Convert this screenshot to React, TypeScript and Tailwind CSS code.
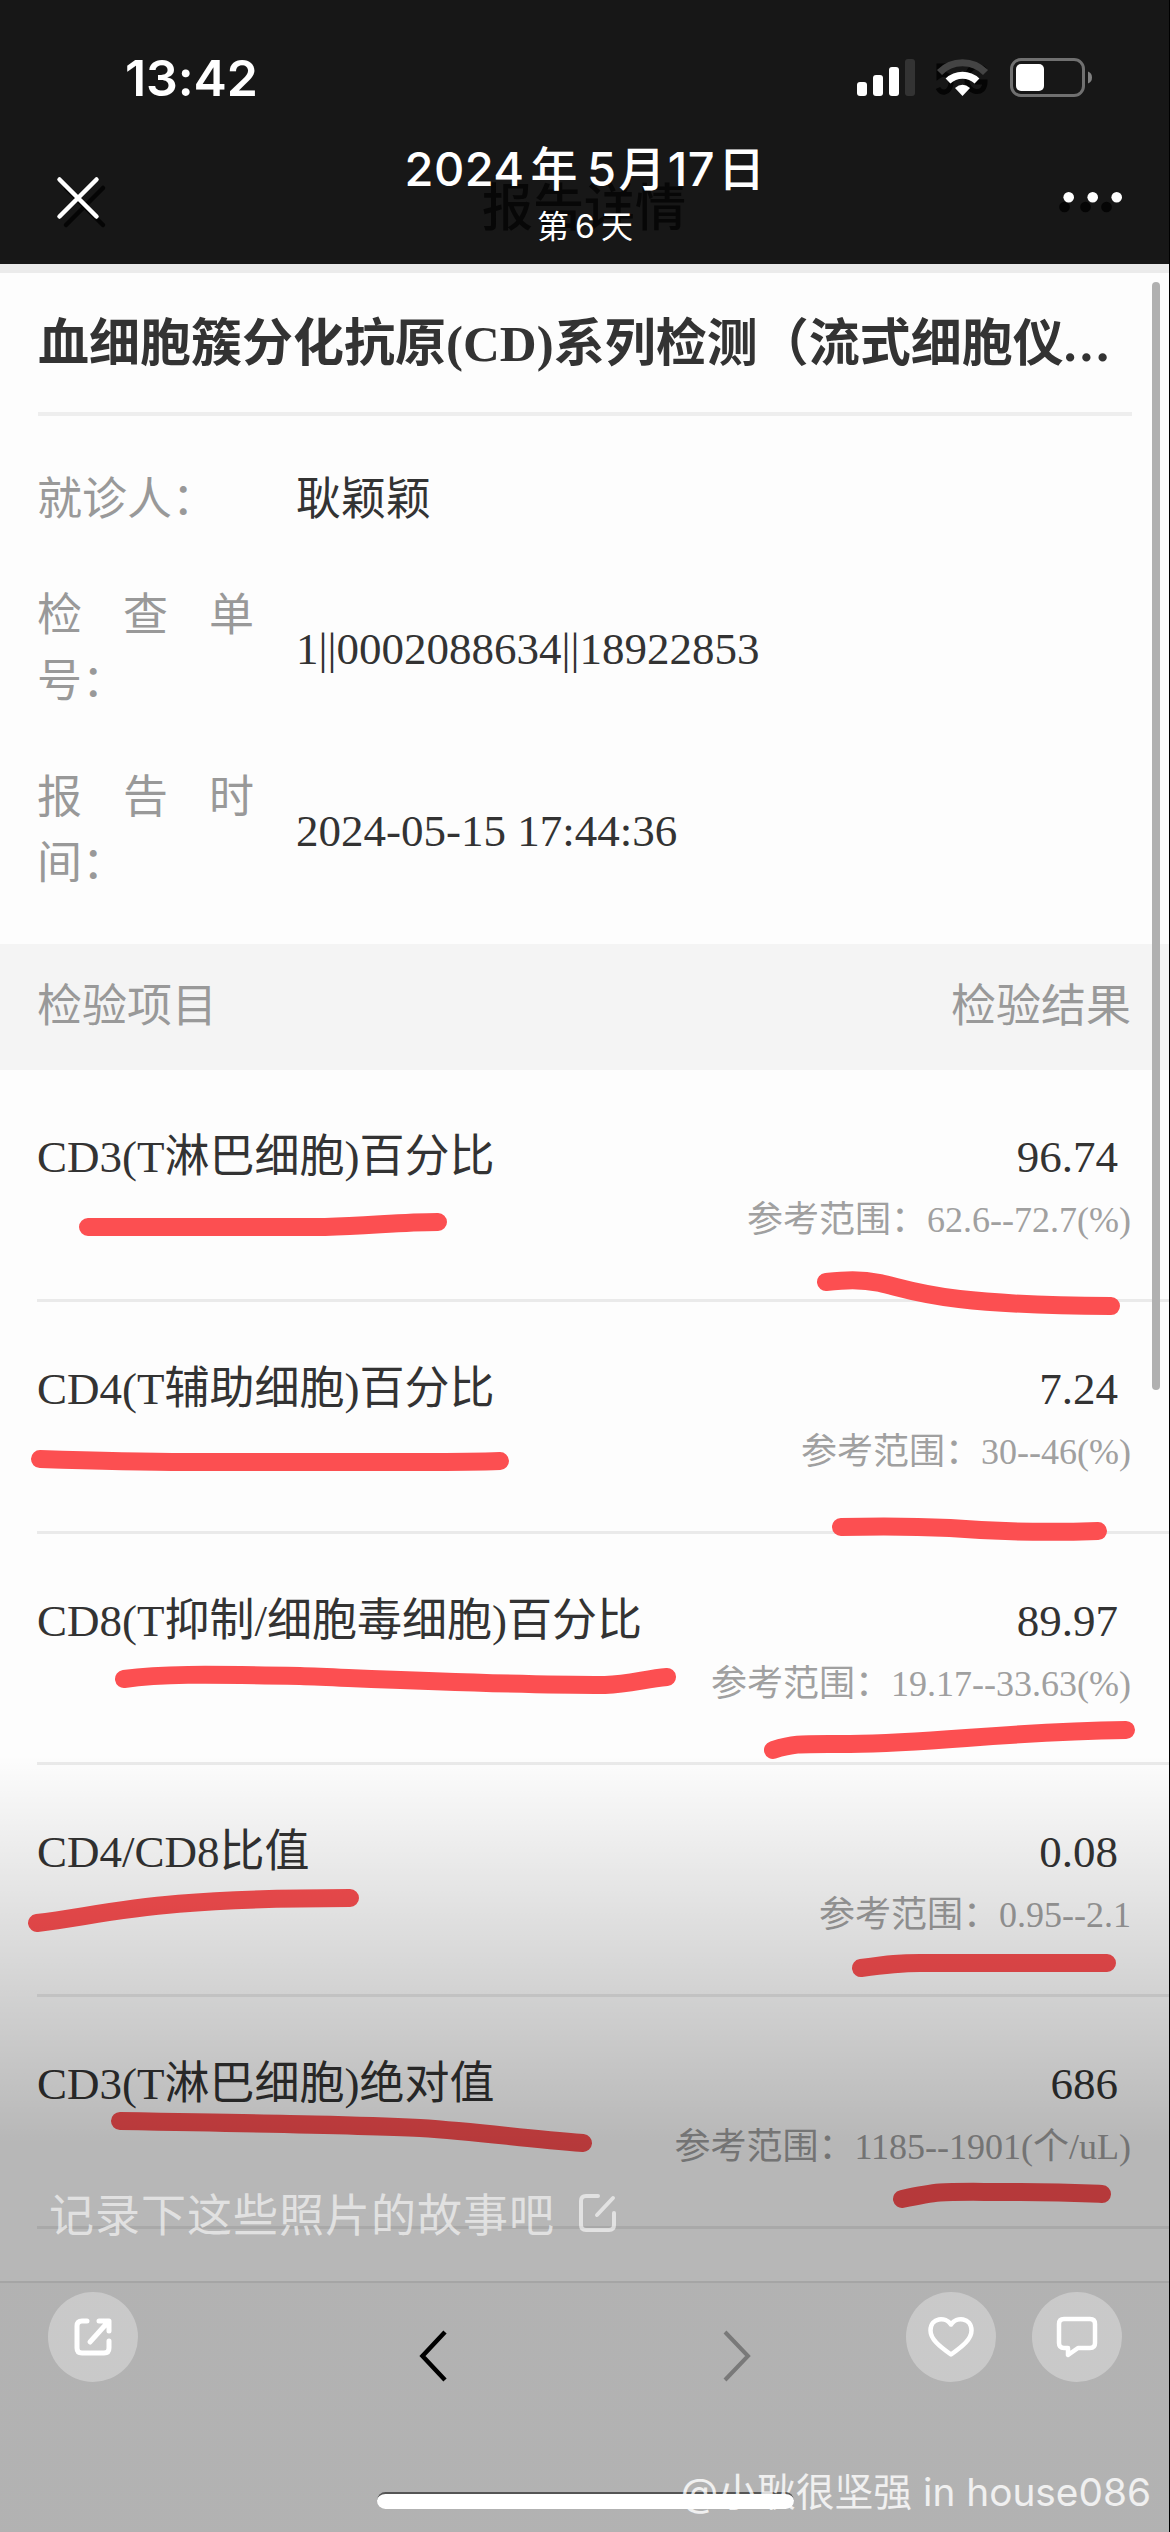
import React from "react";

const serif = "font-['Liberation_Serif','Noto_Sans_CJK_SC',serif]";

type Row = { name: string; value: string; range: string };

const rows: Row[] = [
  { name: "CD3(T淋巴细胞)百分比", value: "96.74", range: "62.6--72.7(%)" },
  { name: "CD4(T辅助细胞)百分比", value: "7.24", range: "30--46(%)" },
  { name: "CD8(T抑制/细胞毒细胞)百分比", value: "89.97", range: "19.17--33.63(%)" },
  { name: "CD4/CD8比值", value: "0.08", range: "0.95--2.1" },
  { name: "CD3(T淋巴细胞)绝对值", value: "686", range: "1185--1901(个/uL)" },
];

const strokes = [
  "M88 1227H325C370 1226 400 1222 438 1222",
  "M826 1282C845 1280 860 1279 880 1283C915 1291 940 1305 1111 1306",
  "M40 1459C100 1461 130 1462 187 1462H420C450 1462 475 1462 500 1461",
  "M841 1527C880 1526 910 1526 950 1528C1000 1532 1040 1533 1098 1531",
  "M124 1679C160 1674 200 1674 300 1676C400 1680 500 1685 605 1685C630 1684 645 1679 667 1677",
  "M773 1750C795 1743 800 1744 850 1744C940 1743 1000 1732 1126 1730",
  "M37 1923C110 1914 150 1898 350 1898",
  "M861 1968C890 1964 900 1963 920 1963H1107",
  "M120 2121C300 2124 360 2125 420 2128C480 2132 520 2138 583 2143",
  "M902 2199C945 2190 940 2192 1020 2192C1060 2192 1080 2193 1102 2194",
];

function Header() {
  return (
    <header className="relative h-[264px] shrink-0 bg-[#171717] text-white font-['Inter','Noto_Sans_CJK_SC',sans-serif]">
      <div className="flex h-[156px] items-center justify-between pl-[125px] pr-[78px]">
        <span className="text-[50px] leading-none font-semibold tracking-[-0.1px]">13:42</span>
        <svg width="236" height="42" viewBox="855 57 236 42" fill="none">
          <rect x="856" y="82" width="10" height="14" rx="3" fill="#fff" />
          <rect x="872" y="75" width="10" height="21" rx="3" fill="#fff" />
          <rect x="888" y="67" width="10" height="29" rx="3" fill="#fff" />
          <rect x="904" y="59" width="10" height="37" rx="3" fill="#333" />
          <path d="M950 66H938V76C944 72 951 76 950 84C948 94 940 94 937 88M984 70C976 62 966 68 966 80C966 94 984 96 984 82H974" stroke="#050505" strokeWidth="5" />
          <path d="M938.500 72.500A32 32 0 0 1 984.500 72.500" stroke="#444" strokeWidth="7" />
          <path d="M947 81A21 21 0 0 1 976 81" stroke="#fff" strokeWidth="7" />
          <path d="M961.500 96L954 88Q961.500 81.500 969 88Z" fill="#fff" />
          <rect x="1010.500" y="59.500" width="72" height="36" rx="9.500" stroke="#707070" strokeWidth="3" />
          <rect x="1015" y="64" width="28" height="27" rx="5" fill="#fff" />
          <path d="M1087 71.500Q1091 73 1091 77.500T1087 83.500Z" fill="#808080" />
        </svg>
      </div>
      <span className="absolute top-[170px] left-[482px] text-[51px] leading-[76px] font-medium text-[#070707]">报告详情</span>
      <div className="absolute inset-x-0 top-[138px] flex flex-col items-center">
        <span className="text-[47px] leading-[62px] font-medium tracking-[0.4px]">
          2024<span className="mr-[9px] ml-[6px]">年</span>5<span className="mx-[2px]">月</span>17<span className="ml-[3px]">日</span>
        </span>
        <span className="mt-[5px] text-[32px] leading-[44px]">第<span className="mx-[6px]">6</span>天</span>
      </div>
      <svg className="absolute left-[50px] top-[170px]" width="62" height="62" viewBox="50 170 62 62" strokeLinecap="round" strokeWidth="4.500">
        <path d="M66 188L103 225M103 188L66 225" stroke="#050505" />
        <path d="M59.500 179.500L96.500 216.500M96.500 179.500L59.500 216.500" stroke="#fff" />
      </svg>
      <svg className="absolute left-[1055px] top-[185px]" width="72" height="32" viewBox="1055 185 72 32">
        <g fill="#050505"><circle cx="1064.500" cy="207" r="5.300" /><circle cx="1085.500" cy="207" r="5.300" /><circle cx="1106.500" cy="207" r="5.300" /></g>
        <g fill="#fff"><circle cx="1068.700" cy="197.300" r="5.300" /><circle cx="1092.700" cy="197.300" r="5.300" /><circle cx="1116.700" cy="197.300" r="5.300" /></g>
      </svg>
    </header>
  );
}

function Info({ lines, value }: { lines: string[]; value: string }) {
  return (
    <div className="flex items-center text-[45px] leading-[66px]">
      <div className="w-[259px] shrink-0 text-[#999]">
        {lines.map((line, i) => (
          <div
            key={line}
            className={lines.length > 1 && i === 0 ? "flex w-[217px] justify-between" : "w-[217px]"}
          >
            {lines.length > 1 && i === 0 ? line.split("").map((c) => <span key={c}>{c}</span>) : line}
          </div>
        ))}
      </div>
      <div className="text-[#333]">{value}</div>
    </div>
  );
}

export default function App() {
  return (
    <div className="relative flex h-[2532px] w-[1170px] flex-col overflow-hidden bg-[#fdfdfd]">
      <Header />
      <div className="h-[9px] shrink-0 bg-[#ebebeb]" />
      <main className={`flex shrink-0 flex-col text-[#333] ${serif}`}>
        <div className="mx-[38px] h-[143px] border-b-4 border-[#eee]">
          <h1 className="pt-[33px] text-[51px] leading-[76px] font-bold whitespace-nowrap">
            血细胞簇分化抗原(CD)系列检测（流式细胞仪<span className="tracking-[3.500px]">...</span>
          </h1>
        </div>
        <section className="flex h-[528px] flex-col gap-[50px] pt-[51px] pl-[37px]">
          <Info lines={["就诊人："]} value="耿颖颖" />
          <Info lines={["检查单", "号："]} value="1||0002088634||18922853" />
          <Info lines={["报告时", "间："]} value="2024-05-15 17:44:36" />
        </section>
        <div className="flex h-[126px] items-center justify-between bg-[#f4f4f4] pt-[2px] pr-[39px] pl-[37px] text-[45px] text-[#999]">
          <span>检验项目</span>
          <span>检验结果</span>
        </div>
        {rows.map((r) => (
          <div key={r.name} className="ml-[37px] flex h-[231.800px] justify-between border-b-3 border-[#eaeaea] pt-[54px] pr-[39px]">
            <span className="text-[45px] leading-[66px]">{r.name}</span>
            <div className="flex flex-col items-end">
              <span className="pr-[13px] text-[45px] leading-[66px]">{r.value}</span>
              <span className="text-[36px] leading-[60px] text-[#a0a0a0]">参考范围：{r.range}</span>
            </div>
          </div>
        ))}
      </main>
      <footer className="mt-[52px] flex h-[251px] shrink-0 justify-between border-t-2 border-[#e4e4e4] bg-[#f7f7f7] pr-[415px] pl-[415px]">
        <svg className="mt-[43px]" width="34" height="60" viewBox="415 2326 34 60" fill="none" stroke="#000" strokeWidth="4.500"><path d="M445 2332L422.500 2356L445 2380" /></svg>
        <svg className="mt-[43px]" width="34" height="60" viewBox="721 2326 34 60" fill="none" stroke="#a8a8a8" strokeWidth="4"><path d="M725 2332L748 2356L725 2380" /></svg>
      </footer>

      <div className="absolute top-[282px] left-[1152px] h-[1108px] w-[8px] rounded-full bg-[#b0b0b0]" />
      <svg className="absolute inset-0" width="1170" height="2532" fill="none" stroke="#fc4f51" strokeWidth="18" strokeLinecap="round" strokeLinejoin="round">
        {strokes.map((d) => <path key={d} d={d} />)}
      </svg>
      <div className="absolute inset-x-0 top-[1755px] bottom-0 bg-[linear-gradient(to_bottom,transparent_0px,rgba(0,0,0,0.28)_390px,rgba(0,0,0,0.28)_100%)]" />
      <div className="absolute top-[2492px] left-[377px] h-[17px] w-[417px] rounded-full border-t-2 border-[#555] bg-white" />

      <div className="absolute top-[2180px] left-[49px] flex items-center gap-[23px] text-[45px] leading-[66px] tracking-[1px] text-white/60 font-['Noto_Sans_CJK_SC',sans-serif]">
        记录下这些照片的故事吧
        <svg width="40" height="40" viewBox="0 0 40 40" fill="none" stroke="currentColor" strokeWidth="4" strokeLinecap="round">
          <path d="M20 3H8Q3 3 3 8V32Q3 37 8 37H31Q36 37 36 32V20M35 5L19 22" />
        </svg>
      </div>
      <div className="absolute top-[2292px] right-[48px] left-[48px] flex items-center text-white">
        <div className="mr-auto flex size-[90px] items-center justify-center rounded-full bg-white/30">
          <svg width="42" height="42" viewBox="0 0 42 42" fill="none" stroke="currentColor" strokeWidth="5" strokeLinecap="round" strokeLinejoin="round">
            <path d="M15 5H10Q5 5 5 10V32Q5 37 10 37H32Q37 37 37 32V25M27 5H37V15M36 6L18 26" />
          </svg>
        </div>
        <div className="mr-[36px] flex size-[90px] items-center justify-center rounded-full bg-white/30">
          <svg width="50" height="46" viewBox="0 0 50 46" fill="none" stroke="currentColor" strokeWidth="4.500" strokeLinejoin="round">
            <path d="M25 10.500C20 2.500 4.500 3 4.500 16.500C4.500 25 13 32 25 40.500C37 32 45.500 25 45.500 16.500C45.500 3 30 2.500 25 10.500Z" />
          </svg>
        </div>
        <div className="flex size-[90px] items-center justify-center rounded-full bg-white/30">
          <svg width="44" height="44" viewBox="0 0 44 44" fill="none" stroke="currentColor" strokeWidth="4.500" strokeLinejoin="round">
            <path d="M9 4H35Q40 4 40 9V28Q40 33 35 33H23L13 40V33H9Q4 33 4 28V9Q4 4 9 4Z" />
          </svg>
        </div>
      </div>
      <div className="absolute top-[2463px] right-[19px] text-[38.800px] leading-[58px] whitespace-nowrap text-white/80 font-['Inter','Noto_Sans_CJK_SC',sans-serif]">@小耿很坚强 in house086</div>
      <div className="absolute top-0 right-0 h-full w-px bg-black" />
    </div>
  );
}
